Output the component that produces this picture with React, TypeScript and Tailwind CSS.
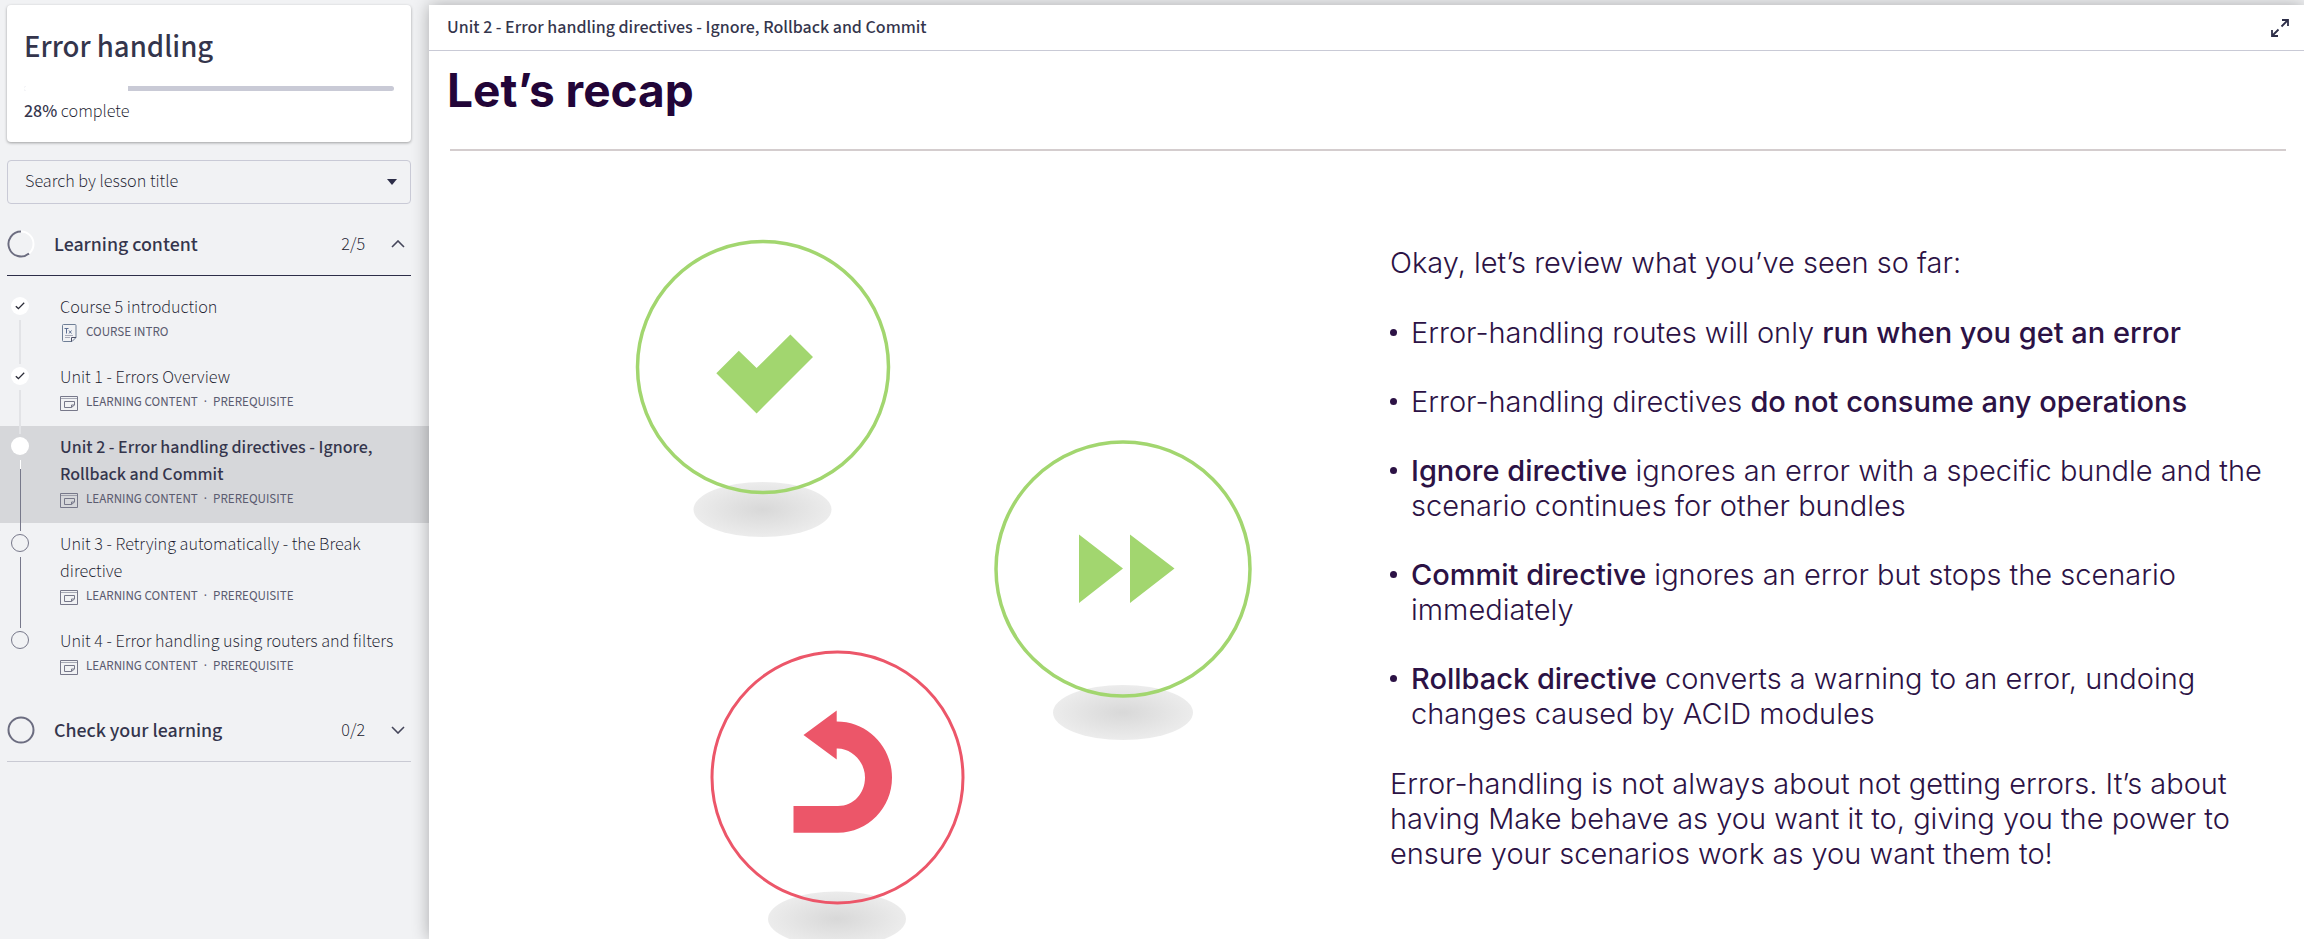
import React from "react";

type Status = "done" | "current" | "todo";

type Lesson = {
  title: string;
  kind: "intro" | "content";
  tags: string[];
  status: Status;
};

const lessons: Lesson[] = [
  { title: "Course 5 introduction", kind: "intro", tags: ["COURSE INTRO"], status: "done" },
  { title: "Unit 1 - Errors Overview", kind: "content", tags: ["LEARNING CONTENT", "PREREQUISITE"], status: "done" },
  {
    title: "Unit 2 - Error handling directives - Ignore, Rollback and Commit",
    kind: "content",
    tags: ["LEARNING CONTENT", "PREREQUISITE"],
    status: "current",
  },
  {
    title: "Unit 3 - Retrying automatically - the Break directive",
    kind: "content",
    tags: ["LEARNING CONTENT", "PREREQUISITE"],
    status: "todo",
  },
  {
    title: "Unit 4 - Error handling using routers and filters",
    kind: "content",
    tags: ["LEARNING CONTENT", "PREREQUISITE"],
    status: "todo",
  },
];

function ContentIcon() {
  return (
    <svg width="18" height="15" viewBox="0 0 18 15" fill="none" stroke="#77788a" aria-hidden="true">
      <path d="M0.5 0.5h17v14h-17z" />
      <path d="M0.5 2.5h17" strokeOpacity="0.6" />
      <path d="M11.5 11.500h-7v-6h10v3.500M14.500 9h-3v2.500z" />
    </svg>
  );
}

function IntroIcon() {
  return (
    <svg width="18" height="18" viewBox="0 0 18 18" fill="none" stroke="#6f7f96" aria-hidden="true">
      <path d="M12 17.500H3.500a1 1 0 0 1-1-1v-15a1 1 0 0 1 1-1h11.500a1 1 0 0 1 1 1V13.500z" />
      <path d="M11.500 17.500v-4h4.500" stroke="#4c4f66" />
      <path d="M4.500 4.500h4M6.500 4.500v5M9 6.500l2.500 3M11.500 6.500l-2.500 3" stroke="#5d6f92" />
      <path d="M5 11.500h8M5 13.500h5" stroke="#a9abb8" />
    </svg>
  );
}

function StatusDot({ status }: { status: Status }) {
  if (status === "todo") {
    return <span className="size-[18px] shrink-0 rounded-full border border-[#77788a]" />;
  }
  return (
    <span className="flex size-[18px] shrink-0 items-center justify-center rounded-full bg-white">
      {status === "done" && (
        <svg width="10" height="8" viewBox="0 0 10 8" fill="none" stroke="#2b2c38" strokeWidth="1.3" aria-hidden="true">
          <path d="M0.800 4.200 3.400 6.600 9.200 0.800" />
        </svg>
      )}
    </span>
  );
}

function LessonRow({ lesson, last }: { lesson: Lesson; last: boolean }) {
  const current = lesson.status === "current";
  return (
    <li>
      <a
        href="#"
        aria-current={current ? "page" : undefined}
        className={`flex pr-[18px] pl-[11px] ${current ? "bg-[#d6d7da]" : ""}`}
      >
        <span className="flex w-[18px] shrink-0 flex-col items-center pt-[11px]">
          <StatusDot status={lesson.status} />
          {!last && (
            <span className="relative z-10 mt-[5px] -mb-2 flex flex-1 flex-col">
              {current && <span className="h-[9px] w-px bg-white" />}
              <span
                className={
                  lesson.status === "done" ? "w-0.5 flex-1 bg-[#e2e3e6]" : "w-px flex-1 bg-[#77788a]"
                }
              />
            </span>
          )}
        </span>
        <span className="ml-[31px] flex flex-col pt-2 pb-[11px]">
          <span
            className={`text-lg leading-[27px] ${current ? "font-medium text-[#34354c]" : "font-[350] text-[#15162b]"}`}
          >
            {lesson.title}
          </span>
          <span className="flex h-6 items-center text-[13px] text-[#5b5c70]">
            {lesson.kind === "intro" ? <IntroIcon /> : <ContentIcon />}
            <span className="ml-2 flex gap-[6px]">
              {lesson.tags.map((tag, i) => (
                <React.Fragment key={tag}>
                  {i > 0 && <span>·</span>}
                  <span>{tag}</span>
                </React.Fragment>
              ))}
            </span>
          </span>
        </span>
      </a>
    </li>
  );
}

function SectionHeader({ title, count, open }: { title: string; count: string; open: boolean }) {
  return (
    <h2 className={`mr-[18px] ml-[7px] border-b ${open ? "border-[#2d2e48]" : "border-[#c9cad3]"}`}>
      <button type="button" aria-expanded={open} className="flex h-[62px] w-full items-center text-left">
        <svg width="28" height="28" viewBox="0 0 28 28" fill="none" strokeWidth="2" aria-hidden="true">
          <circle cx="14" cy="14" r="12.500" stroke={open ? "#ffffff" : "#6c6d80"} />
          {open && <path d="M14 1.500A12.500 12.500 0 1 0 22 23.600" stroke="#6c6d80" />}
        </svg>
        <span className="ml-[19px] flex-1 pt-0.5 text-xl font-medium text-[#34354c]">{title}</span>
        <span className="pt-0.5 text-lg font-[350] text-[#15162b]">{count}</span>
        <svg width="14" height="8" viewBox="0 0 14 8" fill="none" stroke="#45465a" strokeWidth="1.600" className="mr-[6px] ml-[26px]" aria-hidden="true">
          <path d={open ? "M1 7l6-6 6 6" : "M1 1l6 6 6-6"} />
        </svg>
      </button>
    </h2>
  );
}

function Sidebar() {
  return (
    <aside className="w-[429px] shrink-0 pt-[5px] text-[#34354c]">
      <section className="mr-[18px] ml-[7px] rounded-[4px] bg-white px-[17px] pt-[22px] pb-[13px] shadow-[0_1px_3px_rgba(0,0,0,0.35)]">
        <h1 className="text-[31px] leading-10 font-medium">Error handling</h1>
        <div
          role="progressbar"
          aria-label="Course progress"
          aria-valuenow={28}
          className="mt-[19px] h-[5px] overflow-hidden rounded-full bg-[#c9cad6]"
        >
          <div className="h-full w-[28%] bg-white" />
        </div>
        <p className="mt-2 h-[30px] text-lg leading-[26px] font-[350] text-[#15162b]">
          <strong className="font-medium text-[#34354c]">28%</strong> complete
        </p>
      </section>

      <div className="relative mt-[18px] mr-[18px] ml-[7px]">
        <select
          aria-label="Search by lesson title"
          className="h-11 w-full appearance-none rounded-[4px] border border-[#c9cad6] bg-transparent pr-10 pl-[17px] text-lg font-[350] text-[#15162b]"
        >
          <option>Search by lesson title</option>
        </select>
        <svg width="10" height="6" viewBox="0 0 10 6" className="pointer-events-none absolute top-[19px] right-[14px]" aria-hidden="true">
          <path d="M0 0h10L5 6z" fill="#2d2e48" />
        </svg>
      </div>

      <nav className="mt-[9px]" aria-label="Lessons">
        <SectionHeader title="Learning content" count="2/5" open />
        <ul className="pt-[10px] pb-[9px]">
          {lessons.map((lesson, i) => (
            <LessonRow key={lesson.title} lesson={lesson} last={i === lessons.length - 1} />
          ))}
        </ul>
        <SectionHeader title="Check your learning" count="0/2" open={false} />
      </nav>
    </aside>
  );
}

function Illustration() {
  return (
    <svg width="618" height="716" viewBox="635 239 618 716" fill="none" className="shrink-0" role="img" aria-label="Ignore, commit and rollback">
      <defs>
        <radialGradient id="shade">
          <stop offset="0" stopColor="#d8d8d8" />
          <stop offset="1" stopColor="#ececec" />
        </radialGradient>
      </defs>
      <ellipse cx="762.500" cy="509.500" rx="69" ry="27.500" fill="url(#shade)" />
      <circle cx="763" cy="367" r="125.500" stroke="#a2d66f" strokeWidth="3.500" />
      <path d="M716.300 373.300 738.800 350.800 756.600 368 790.400 334.600 813 357 756.600 413.500z" fill="#a2d66f" />

      <ellipse cx="1123" cy="712.500" rx="70" ry="27.500" fill="url(#shade)" />
      <circle cx="1123" cy="569" r="127" stroke="#a2d66f" strokeWidth="3.500" />
      <path d="M1079 534.500v68.500l44-34.500zM1130 534.500v68.500l44.500-34.500z" fill="#a2d66f" />

      <ellipse cx="837" cy="919" rx="69" ry="27.500" fill="url(#shade)" />
      <circle cx="837.500" cy="777.500" r="125.500" stroke="#ec5669" strokeWidth="3" />
      <path
        d="M803.500 735 836.700 710.500V721.500C868 721.500 892 747 892 777.500S868 832.700 838 832.700H793.500V806H838C854 806 865 793 865 777.500S852 748 836.700 748.500V759.500z"
        fill="#ec5669"
      />
    </svg>
  );
}

function Strong({ children }: { children: React.ReactNode }) {
  return <strong className="font-medium">{children}</strong>;
}

function Bullet({ children }: { children: React.ReactNode }) {
  return (
    <li className="flex">
      <span className="flex h-[35px] w-[21px] shrink-0 items-center" aria-hidden="true">
        <span className="size-[7px] rounded-full bg-[#2c1245]" />
      </span>
      <p>{children}</p>
    </li>
  );
}

export default function App() {
  return (
    <div className="flex h-screen overflow-hidden bg-[#f1f2f4] font-['Source_Sans_3','Noto_Sans_CJK_SC',sans-serif]">
      <Sidebar />
      <main className="relative mt-[5px] min-w-0 flex-1 bg-white shadow-[0_0_16px_rgba(0,0,0,0.3)]">
        <header className="flex h-[46px] items-center justify-between border-b border-[#c9cad6] pr-[15px] pl-[18px]">
          <p className="text-lg leading-6 font-medium text-[#34354c]">
            Unit 2 - Error handling directives - Ignore, Rollback and Commit
          </p>
          <button type="button" aria-label="Full screen">
            <svg width="18" height="18" viewBox="0 0 18 18" fill="none" stroke="#2d2e48" strokeWidth="1.800" aria-hidden="true">
              <path d="M11 1h6v6M17 1l-6.500 6.500M7 17H1v-6M1 17l6.500-6.500" />
            </svg>
          </button>
        </header>

        <article className="font-['Inter',sans-serif] text-[#2c1245]">
          <h2 className="pt-[9px] pl-[18px] text-[46px] leading-[60px] font-bold text-[#220538]">Let’s recap</h2>
          <hr className="mt-[29px] mr-[18px] ml-[21px] border-t-2 border-[#d4cdce]" />
          <div className="grid grid-cols-[961fr_914fr]">
            <div className="flex justify-end pt-[88px] pr-[137px]">
              <Illustration />
            </div>
            <div className="pt-[94px] pr-[36px] text-[29px] leading-[35px] font-light">
              <p>Okay, let’s review what you’ve seen so far:</p>
              <ul className="my-[35px] flex flex-col gap-[34px]">
                <Bullet>
                  Error-handling routes will only <Strong>run when you get an error</Strong>
                </Bullet>
                <Bullet>
                  Error-handling directives <Strong>do not consume any operations</Strong>
                </Bullet>
                <Bullet>
                  <Strong>Ignore directive</Strong> ignores an error with a specific bundle and the scenario continues
                  for other bundles
                </Bullet>
                <Bullet>
                  <Strong>Commit directive</Strong> ignores an error but stops the scenario immediately
                </Bullet>
                <Bullet>
                  <Strong>Rollback directive</Strong> converts a warning to an error, undoing changes caused by ACID
                  modules
                </Bullet>
              </ul>
              <p>
                Error-handling is not always about not getting errors. It’s about having Make behave as you want it to,
                giving you the power to ensure your scenarios work as you want them to!
              </p>
            </div>
          </div>
        </article>
      </main>
    </div>
  );
}
